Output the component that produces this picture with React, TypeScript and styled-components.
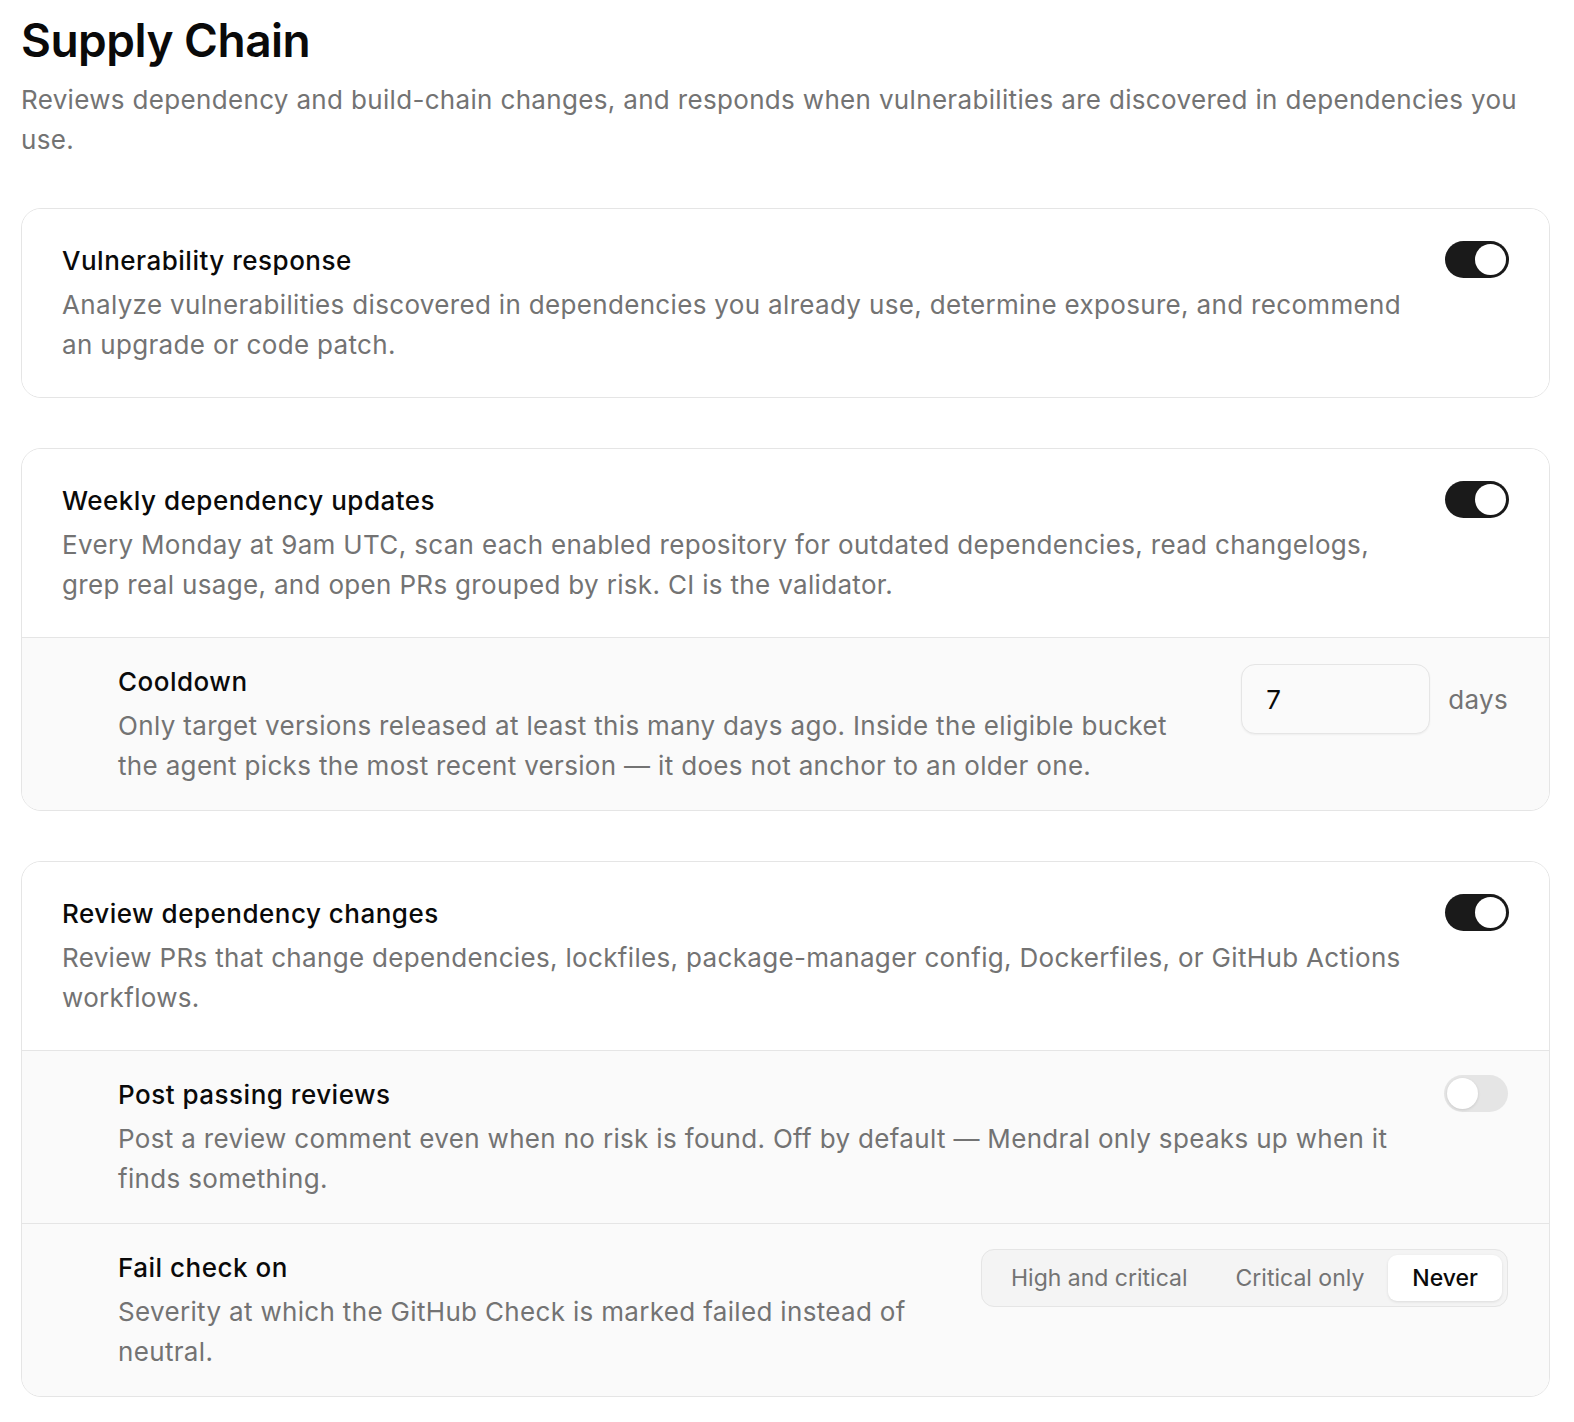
import React from 'react';
import { createGlobalStyle, styled } from 'styled-components';

const GlobalStyle = createGlobalStyle`
body {
  margin: 0;
  background: #ffffff;
  font-family: Inter, 'Noto Sans', sans-serif;
  color: #0a0a0a;
}
`

const Page = styled.div`
width: 1529px;
margin-left: 21px;
padding-top: 12px;
`

const Title = styled.h1`
margin: 0;
font-size: 46px;
line-height: 56px;
font-weight: 600;
letter-spacing: -0.5px;
color: #0a0a0a;
`

const Lead = styled.p`
margin: 12px 0 48px;
font-size: 26px;
line-height: 40px;
letter-spacing: 0.33px;
color: #737373;
`

const Stack = styled.div`
display: flex;
flex-direction: column;
gap: 50px;
`

const Card = styled.section`
border: 1px solid #e5e5e5;
border-radius: 20px;
overflow: hidden;
background: #ffffff;
`

const Row = styled.div<{ $sub?: boolean }>`
display: flex;
align-items: flex-start;
gap: ${p => (p.$sub ? 48 : 32)}px;
padding: ${p => (p.$sub ? '24px 41px 24px 96px' : '32px 40px 32px 40px')};
background: ${p => (p.$sub ? '#fafafa' : '#ffffff')};
border-top: ${p => (p.$sub ? '1px solid #e5e5e5' : 'none')};
`

const Text = styled.div`
flex: 1;
min-width: 0;
display: flex;
flex-direction: column;
gap: 4px;
`

const Heading = styled.div`
font-size: 26px;
line-height: 40px;
font-weight: 500;
letter-spacing: 0.5px;
color: #0a0a0a;
`

const Paragraph = styled.div`
font-size: 26px;
line-height: 40px;
letter-spacing: 0.33px;
color: #737373;
`

const Track = styled.div<{ $on: boolean }>`
flex: none;
width: 64px;
height: 37px;
border-radius: 999px;
background: ${p => (p.$on ? '#1a1a1a' : '#e5e5e5')};
display: flex;
align-items: center;
justify-content: ${p => (p.$on ? 'flex-end' : 'flex-start')};
padding: 0 3px;
box-sizing: border-box;
`

const Knob = styled.div`
width: 31px;
height: 31px;
border-radius: 50%;
background: #ffffff;
box-shadow: 0 1px 3px rgba(0, 0, 0, 0.12);
`

const Control = styled.div`
flex: none;
display: flex;
align-items: center;
gap: 18px;
margin-top: 2px;
`

const NumberBox = styled.div`
width: 189px;
height: 70px;
box-sizing: border-box;
border: 1px solid #e5e5e5;
border-radius: 14px;
background: #fafafa;
box-shadow: 0 1px 2px rgba(0, 0, 0, 0.05);
display: flex;
align-items: center;
padding: 0 24px;
font-size: 26px;
color: #0a0a0a;
`

const Unit = styled.span`
font-size: 26px;
letter-spacing: 0.33px;
color: #737373;
`

const Segmented = styled.div`
flex: none;
display: flex;
align-items: center;
padding: 5px;
border: 1px solid #e5e5e5;
border-radius: 13px;
background: #f4f4f4;
margin-top: 1px;
`

const Segment = styled.div<{ $active?: boolean }>`
height: 46px;
display: flex;
align-items: center;
padding: 0 24px;
border-radius: 9px;
font-size: 23px;
font-weight: ${p => (p.$active ? 500 : 400)};
color: ${p => (p.$active ? '#0a0a0a' : '#737373')};
background: ${p => (p.$active ? '#ffffff' : 'transparent')};
box-shadow: ${p => (p.$active ? '0 1px 3px rgba(0, 0, 0, 0.1)' : 'none')};
`

const Toggle = ({ on }: { on: boolean }) => (
    <Track $on={on}>
        <Knob />
    </Track>
);

const Setting = ({ title, body, sub, children }: { title: string; body: string; sub?: boolean; children: React.ReactNode }) => (
    <Row $sub={sub}>
        <Text>
            <Heading>{title}</Heading>
            <Paragraph>{body}</Paragraph>
        </Text>
        {children}
    </Row>
);

export default function App() {
    return (
        <Page>
            <GlobalStyle />
            <Title>Supply Chain</Title>
            <Lead>
                Reviews dependency and build-chain changes, and responds when vulnerabilities are discovered in dependencies you use.
            </Lead>
            <Stack>
                <Card>
                    <Setting
                        title="Vulnerability response"
                        body="Analyze vulnerabilities discovered in dependencies you already use, determine exposure, and recommend an upgrade or code patch."
                    >
                        <Toggle on />
                    </Setting>
                </Card>
                <Card>
                    <Setting
                        title="Weekly dependency updates"
                        body="Every Monday at 9am UTC, scan each enabled repository for outdated dependencies, read changelogs, grep real usage, and open PRs grouped by risk. CI is the validator."
                    >
                        <Toggle on />
                    </Setting>
                    <Setting
                        sub
                        title="Cooldown"
                        body="Only target versions released at least this many days ago. Inside the eligible bucket the agent picks the most recent version — it does not anchor to an older one."
                    >
                        <Control>
                            <NumberBox>7</NumberBox>
                            <Unit>days</Unit>
                        </Control>
                    </Setting>
                </Card>
                <Card>
                    <Setting
                        title="Review dependency changes"
                        body="Review PRs that change dependencies, lockfiles, package-manager config, Dockerfiles, or GitHub Actions workflows."
                    >
                        <Toggle on />
                    </Setting>
                    <Setting
                        sub
                        title="Post passing reviews"
                        body="Post a review comment even when no risk is found. Off by default — Mendral only speaks up when it finds something."
                    >
                        <Toggle on={false} />
                    </Setting>
                    <Setting
                        sub
                        title="Fail check on"
                        body="Severity at which the GitHub Check is marked failed instead of neutral."
                    >
                        <Segmented>
                            <Segment>High and critical</Segment>
                            <Segment>Critical only</Segment>
                            <Segment $active>Never</Segment>
                        </Segmented>
                    </Setting>
                </Card>
            </Stack>
        </Page>
    );
}
